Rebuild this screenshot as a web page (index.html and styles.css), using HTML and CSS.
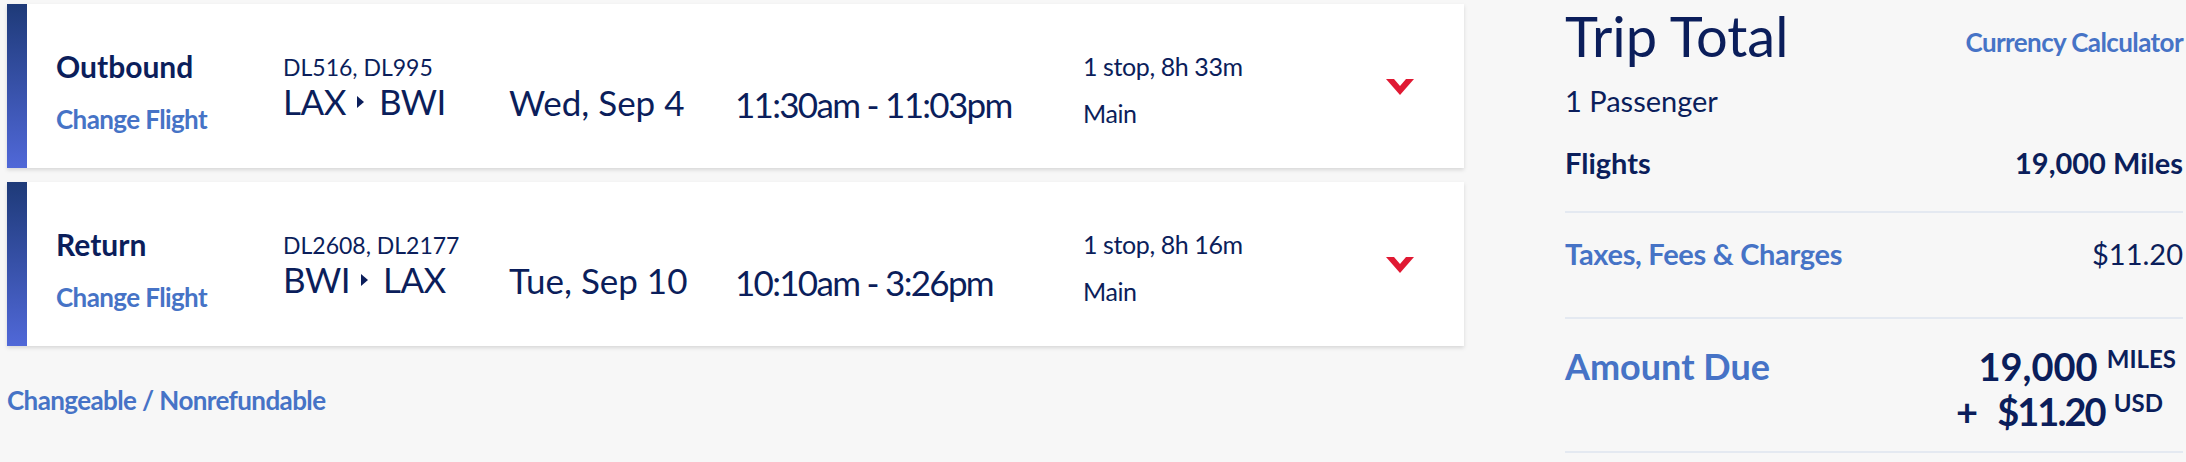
FILE: index.html
```html
<!DOCTYPE html>
<html lang="en">
<head>
<meta charset="utf-8">
<title>Trip Summary</title>
<link rel="stylesheet" href="styles.css">
</head>
<body>
<div class="page">
  <section class="flights">
    <article class="card">
      <div class="card-bar"></div>
      <div class="col-label">
        <div class="dir">Outbound</div>
        <a class="link change">Change Flight</a>
      </div>
      <div class="col-route">
        <div class="fno">DL516, DL995</div>
        <div class="big route">LAX<svg class="tri" viewBox="0 0 7 12" width="7" height="12"><polygon points="0,0 7,6 0,12" fill="#0b1e5b"/></svg>BWI</div>
      </div>
      <div class="col-date big">Wed, Sep 4</div>
      <div class="col-time big">11:30am - 11:03pm</div>
      <div class="col-info">
        <div class="stops">1 stop, 8h 33m</div>
        <div class="cabin">Main</div>
      </div>
      <div class="col-chev">
        <svg viewBox="0 0 28 16" width="28" height="16"><polygon points="0,0 8,0 14,7 20,0 28,0 14,16" fill="#e01933"/></svg>
      </div>
    </article>
    <article class="card">
      <div class="card-bar"></div>
      <div class="col-label">
        <div class="dir">Return</div>
        <a class="link change">Change Flight</a>
      </div>
      <div class="col-route">
        <div class="fno">DL2608, DL2177</div>
        <div class="big route">BWI<svg class="tri" viewBox="0 0 7 12" width="7" height="12"><polygon points="0,0 7,6 0,12" fill="#0b1e5b"/></svg>LAX</div>
      </div>
      <div class="col-date big">Tue, Sep 10</div>
      <div class="col-time big">10:10am - 3:26pm</div>
      <div class="col-info">
        <div class="stops">1 stop, 8h 16m</div>
        <div class="cabin">Main</div>
      </div>
      <div class="col-chev">
        <svg viewBox="0 0 28 16" width="28" height="16"><polygon points="0,0 8,0 14,7 20,0 28,0 14,16" fill="#e01933"/></svg>
      </div>
    </article>
    <a class="link policy">Changeable / Nonrefundable</a>
  </section>

  <aside class="total">
    <header class="total-head">
      <h1 class="total-title">Trip Total</h1>
      <a class="link calc">Currency Calculator</a>
    </header>
    <div class="pax">1 Passenger</div>
    <div class="row row-flights">
      <span class="strong">Flights</span>
      <span class="strong">19,000 Miles</span>
    </div>
    <div class="row row-taxes">
      <a class="link taxes">Taxes, Fees &amp; Charges</a>
      <span class="amt">$11.20</span>
    </div>
    <div class="row row-due">
      <span class="link due-label">Amount Due</span>
      <div class="due-amt">
        <div class="due-line l1">19,000 <sup>MILES</sup></div>
        <div class="due-line l2"><span class="plus">+</span> <span class="usd">$11.20</span> <sup>USD</sup></div>
      </div>
    </div>
  </aside>
</div>
</body>
</html>
```

FILE: styles.css
```css
* { box-sizing: border-box; }
html, body { margin: 0; padding: 0; }
body {
  background: #f7f7f7;
  font-family: Lato, "Liberation Sans", sans-serif;
  color: #0b1e5b;
  width: 2186px;
  height: 462px;
  overflow: hidden;
}
.page {
  display: flex;
  align-items: flex-start;
  gap: 101px;
  padding: 4px 3px 0 7px;
}
.link { color: #4673c6; font-weight: 700; text-decoration: none; cursor: pointer; }

/* flight cards */
.flights { width: 1457px; display: flex; flex-direction: column; gap: 14px; }
.card {
  height: 164px;
  background: #fff;
  display: grid;
  grid-template-columns: 20px 29px 227px 226px 226px 348px 303px 28px 50px;
  align-items: start;
  box-shadow: 0 2px 4px rgba(0, 0, 0, 0.13);
}
.card-bar {
  grid-column: 1;
  height: 164px;
  background: linear-gradient(to bottom, #1e3a78, #5068d8);
}
.col-label { grid-column: 3; padding-top: 44px; display: flex; flex-direction: column; }
.col-route { grid-column: 4; padding-top: 49px; }
.col-date { grid-column: 5; padding-top: 78px; }
.col-time { grid-column: 6; padding-top: 80px; letter-spacing: -1.7px; }
.col-info { grid-column: 7; padding-top: 47px; }
.col-chev { grid-column: 8; padding-top: 75px; display: flex; }

.dir { font-size: 30px; line-height: 36px; font-weight: 700; }
.change { font-size: 26px; line-height: 32px; margin-top: 19px; letter-spacing: -0.6px; }
.fno { font-size: 23px; line-height: 28px; }
.big { font-size: 35px; line-height: 40px; white-space: nowrap; }
.route { display: flex; align-items: center; letter-spacing: -0.5px; }
.tri { margin: 2px 15px 0 11px; }
.stops, .cabin { font-size: 25px; line-height: 30px; letter-spacing: -0.4px; }
.cabin { margin-top: 17px; }
.policy { margin-top: 24px; font-size: 26px; line-height: 32px; letter-spacing: -0.6px; }

/* trip total */
.total { width: 618px; padding-top: 2px; }
.total-head { display: flex; justify-content: space-between; align-items: flex-start; }
.total-title { margin: 0; font-size: 56px; line-height: 60px; font-weight: 400; }
.calc { font-size: 26px; line-height: 32px; margin-top: 20px; letter-spacing: -0.6px; }
.pax { font-size: 29px; line-height: 36px; margin-top: 17px; }
.row { display: flex; justify-content: space-between; align-items: flex-start; border-bottom: 2px solid #e4e9f1; }
.row-flights { margin-top: 26px; padding-bottom: 30px; font-size: 29px; line-height: 36px; }
.strong { font-weight: 700; }
.row-taxes { padding-top: 23px; padding-bottom: 45px; font-size: 29px; line-height: 36px; }
.taxes { letter-spacing: -0.3px; }
.amt { font-weight: 400; }
.row-due { padding-top: 25px; padding-bottom: 17px; }
.due-label { font-size: 36px; line-height: 44px; }
.due-amt { text-align: right; font-weight: 700; }
.due-line { font-size: 38px; line-height: 44px; white-space: nowrap; }
.due-line.l2 { line-height: 46px; padding-right: 20px; }
.due-line.l1 { padding-right: 7px; }
.due-line sup { font-size: 24px; vertical-align: top; line-height: 30px; }
.usd { letter-spacing: -2px; }
.plus { margin-right: 10px; }
```
